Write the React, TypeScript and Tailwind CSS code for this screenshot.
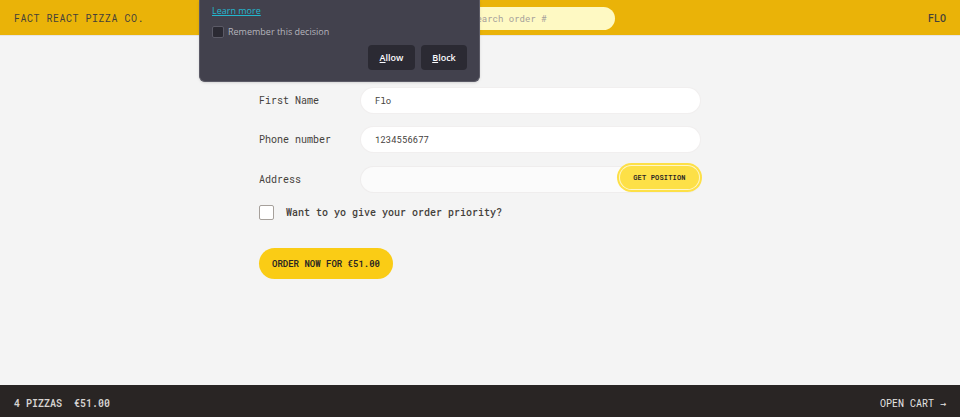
import { useState } from "react";

const inputClass =
  "h-[27px] w-full min-w-0 grow rounded-full border border-stone-200/60 bg-white px-3.5 text-[9px] text-stone-700 outline-none";

function Header() {
  return (
    <header className="flex h-9 items-center justify-between border-b border-stone-200 bg-[#eab308] px-3.5 pt-px text-[10px] uppercase text-stone-700">
      <a href="#home" className="tracking-wider">
        Fact React Pizza Co.
      </a>
      <input
        aria-label="Search order"
        placeholder="Search order #"
        className="h-[23px] w-[158px] rounded-full bg-[#fef9c3] pr-2.5 pl-3.5 text-[9px] outline-none placeholder:text-stone-400"
      />
      <span className="font-medium">Flo</span>
    </header>
  );
}

function PermissionPrompt() {
  return (
    <section
      aria-label="Permission request"
      className="absolute top-0 left-[199px] flex h-[82px] w-[281px] flex-col rounded-b-md border border-t-0 border-[#5b5a66] bg-[#42414d] px-3 pt-[5px] font-['Open_Sans','Noto_Sans',sans-serif] text-[9px] shadow-sm"
    >
      <a href="#learn" className="self-start leading-3 text-[#22b8cf] underline">
        Learn more
      </a>
      <label className="mt-[9px] flex items-center gap-1 leading-3 text-[#b5b4bc]">
        <input
          type="checkbox"
          className="size-3 appearance-none rounded-xs border border-[#5b5a66] bg-[#2b2a33] checked:bg-[#22b8cf]"
        />
        Remember this decision
      </label>
      <div className="mt-[7px] flex justify-end gap-1.5 font-semibold text-[#fbfbfe]">
        <button className="h-[25px] w-[47px] rounded-sm bg-[#2b2a33]">
          <u>A</u>llow
        </button>
        <button className="h-[25px] w-[46px] rounded-sm bg-[#2b2a33]">
          <u>B</u>lock
        </button>
      </div>
    </section>
  );
}

function OrderForm() {
  const [name, setName] = useState("Flo");
  const [phone, setPhone] = useState("1234556677");

  return (
    <form
      onSubmit={(e) => e.preventDefault()}
      className="mx-auto w-full max-w-[470px] px-3.5 pt-[51px]"
    >
      <div className="mb-3 flex items-center gap-[5px]">
        <label htmlFor="name" className="w-24 shrink-0">
          First Name
        </label>
        <input
          id="name"
          className={inputClass}
          value={name}
          onChange={(e) => setName(e.target.value)}
        />
      </div>
      <div className="mb-[13px] flex items-center gap-[5px]">
        <label htmlFor="phone" className="w-24 shrink-0">
          Phone number
        </label>
        <input
          id="phone"
          type="tel"
          className={inputClass}
          value={phone}
          onChange={(e) => setPhone(e.target.value)}
        />
      </div>
      <div className="relative mb-3 flex items-center gap-[5px]">
        <label htmlFor="address" className="w-24 shrink-0">
          Address
        </label>
        <input
          id="address"
          disabled
          className="h-[27px] w-full min-w-0 grow rounded-full border border-stone-200/60 bg-[#fbfbfb] px-3.5 text-[9px]"
        />
        <button
          type="button"
          className="absolute top-0 right-0.5 h-[23px] w-[79px] rounded-full bg-[#fde047] text-[7px] font-semibold tracking-wide text-stone-800 uppercase ring-2 ring-[#fde047] ring-offset-1 ring-offset-[#fff6c8]"
        >
          Get position
        </button>
      </div>
      <div className="mb-7 flex items-center gap-3">
        <input
          id="priority"
          type="checkbox"
          className="size-[15px] shrink-0 appearance-none rounded-xs border border-stone-400 bg-white checked:bg-yellow-400"
        />
        <label htmlFor="priority" className="font-medium">
          Want to yo give your order priority?
        </label>
      </div>
      <button className="h-[31px] w-[134px] rounded-full bg-[#facc15] text-[9px] font-semibold text-stone-800 uppercase">
        Order now for €51.00
      </button>
    </form>
  );
}

function CartOverview() {
  return (
    <footer className="flex h-8 items-center justify-between bg-stone-800 px-3.5 pt-1 text-[10px] text-stone-200 uppercase">
      <p className="flex gap-3 font-semibold text-stone-300">
        <span>4 pizzas</span>
        <span>€51.00</span>
      </p>
      <a href="#cart">Open cart →</a>
    </footer>
  );
}

export default function App() {
  return (
    <div className="relative flex min-h-screen flex-col bg-[#f4f4f4] font-['Roboto_Mono','DejaVu_Sans_Mono',monospace] text-[10px] leading-[15px] text-stone-700">
      <Header />
      <main className="grow">
        <OrderForm />
      </main>
      <CartOverview />
      <PermissionPrompt />
    </div>
  );
}
